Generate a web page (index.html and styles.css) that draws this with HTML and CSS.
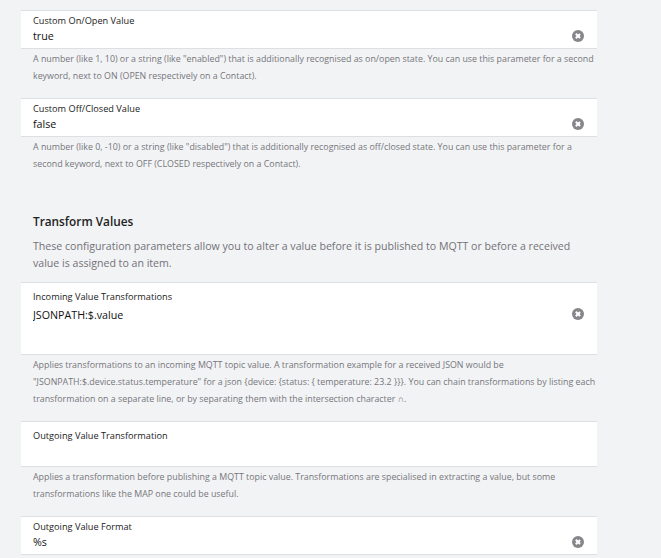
FILE: index.html
```html
<!DOCTYPE html>
<html>
<head>
  <meta charset="UTF-8">
  <title>MQTT Channel Configuration</title>
  <link rel="stylesheet" href="styles.css">
</head>
<body>
  <div class="page">
    <div class="param">
      <div class="item">
        <div class="item-label">Custom On/Open Value</div>
        <div class="item-input">
          <input type="text" value="true">
          <span class="clear-btn"></span>
        </div>
      </div>
      <div class="item-footer">A number (like 1, 10) or a string (like "enabled") that is additionally recognised as on/open state. You can use this parameter for a second keyword, next to ON (OPEN respectively on a Contact).</div>
    </div>

    <div class="param">
      <div class="item">
        <div class="item-label">Custom Off/Closed Value</div>
        <div class="item-input">
          <input type="text" value="false">
          <span class="clear-btn"></span>
        </div>
      </div>
      <div class="item-footer">A number (like 0, -10) or a string (like "disabled") that is additionally recognised as off/closed state. You can use this parameter for a second keyword, next to OFF (CLOSED respectively on a Contact).</div>
    </div>

    <div class="group-title">
      <h2>Transform Values</h2>
      <p>These configuration parameters allow you to alter a value before it is published to MQTT or before a received value is assigned to an item.</p>
    </div>

    <div class="param">
      <div class="item item-textarea">
        <div class="item-label">Incoming Value Transformations</div>
        <div class="item-input">
          <textarea class="tall">JSONPATH:$.value</textarea>
          <span class="clear-btn"></span>
        </div>
      </div>
      <div class="item-footer">Applies transformations to an incoming MQTT topic value. A transformation example for a received JSON would be "JSONPATH:$.device.status.temperature" for a json {device: {status: { temperature: 23.2 }}}. You can chain transformations by listing each transformation on a separate line, or by separating them with the intersection character ∩.</div>
    </div>

    <div class="param">
      <div class="item item-textarea">
        <div class="item-label">Outgoing Value Transformation</div>
        <div class="item-input">
          <textarea class="short"></textarea>
        </div>
      </div>
      <div class="item-footer">Applies a transformation before publishing a MQTT topic value. Transformations are specialised in extracting a value, but some transformations like the MAP one could be useful.</div>
    </div>

    <div class="param">
      <div class="item">
        <div class="item-label">Outgoing Value Format</div>
        <div class="item-input">
          <input type="text" value="%s">
          <span class="clear-btn"></span>
        </div>
      </div>
    </div>
  </div>
</body>
</html>
```

FILE: styles.css
```css
:root {
  --bg-page: #f2f3f5;
  --bg-item: #ffffff;
  --border-color: #dedfe1;
  --text-primary: #111111;
  --text-label: #222222;
  --text-footer: #76767b;
  --text-muted: #727277;
  --clear-color: #86868b;
}

* {
  box-sizing: border-box;
  margin: 0;
  padding: 0;
}

body {
  font-family: 'Open Sans', sans-serif;
  background: var(--bg-page);
  color: var(--text-primary);
}

.page {
  width: 576px;
  margin-left: 21px;
  padding-top: 10px;
}

.item {
  background: var(--bg-item);
  border-top: 1px solid var(--border-color);
  border-bottom: 1px solid var(--border-color);
  padding: 4px 12px 3px;
}

.item-label {
  font-size: 9.2px;
  line-height: 12px;
  color: var(--text-label);
}

.item-input {
  position: relative;
}

input,
textarea {
  display: block;
  width: 100%;
  border: none;
  outline: none;
  background: transparent;
  font-family: inherit;
  font-size: 10.7px;
  color: var(--text-primary);
  resize: none;
}

input {
  height: 18px;
  line-height: 18px;
}

.item-textarea {
  padding-top: 8px;
}

textarea {
  padding-top: 3px;
  line-height: 18px;
}

textarea.tall {
  height: 48px;
}

textarea.short {
  height: 21px;
}

/* round grey "x" that clears the field */
.clear-btn {
  position: absolute;
  right: 1px;
  top: 3px;
  width: 12px;
  height: 12px;
  border-radius: 50%;
  background: var(--clear-color);
}

.item-textarea .clear-btn {
  top: 5px;
}

.clear-btn:before,
.clear-btn:after {
  content: '';
  position: absolute;
  left: 5.3px;
  top: 3px;
  width: 1.5px;
  height: 6px;
  background: #fff;
  transform: rotate(45deg);
}

.clear-btn:after {
  transform: rotate(-45deg);
}

.item-footer {
  padding: 2px 0 13px 12px;
  font-size: 8.85px;
  line-height: 17px;
  color: var(--text-footer);
}

.group-title {
  padding: 25px 12px 10px;
}

.group-title h2 {
  font-size: 11.8px;
  font-weight: 600;
  line-height: 20px;
  color: var(--text-label);
  margin-bottom: 7px;
}

.group-title p {
  font-size: 10.6px;
  line-height: 17px;
  color: var(--text-muted);
}
```
